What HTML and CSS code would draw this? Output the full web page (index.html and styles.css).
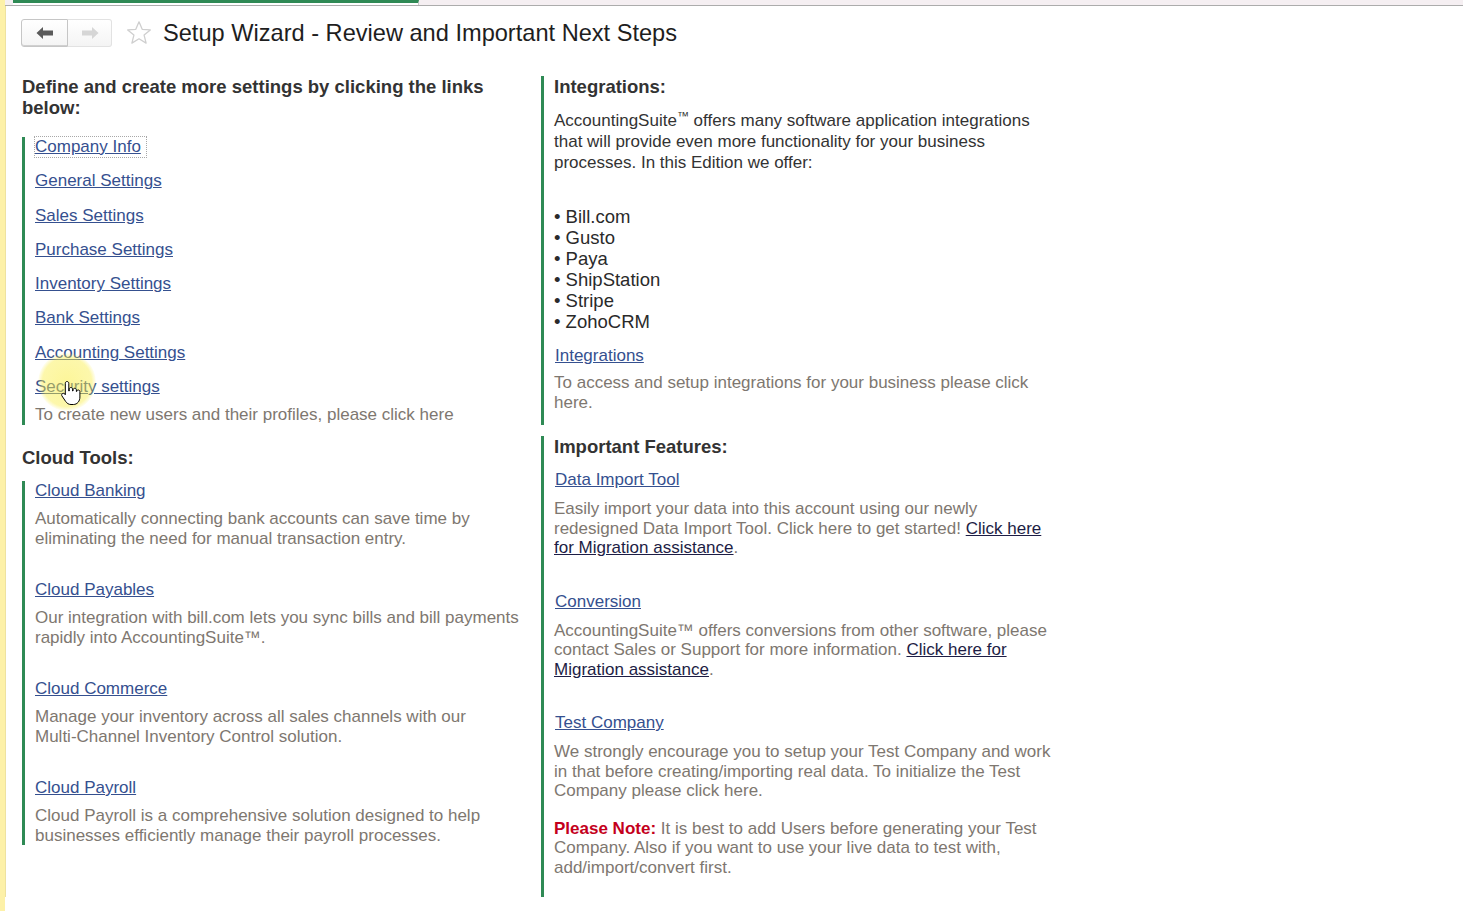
FILE: index.html
```html
<!DOCTYPE html>
<html lang="en">
<head>
    <meta charset="UTF-8">
    <title>Setup Wizard - Review and Important Next Steps</title>
    <link rel="stylesheet" href="styles.css">
</head>
<body>
    <div class="tabbar">
        <div class="tab"></div>
    </div>

    <div class="page">
        <div class="header">
            <div class="nav-buttons">
                <button class="nav-btn back" title="Back">
                    <svg width="18" height="14" viewBox="0 0 18 14"><path d="M0.5 7 L7 1 V4.5 H17 V9.5 H7 V13 Z" fill="#5a5a5a"/></svg>
                </button>
                <button class="nav-btn forward" title="Forward">
                    <svg width="18" height="14" viewBox="0 0 18 14"><path d="M17.5 7 L11 1 V4.5 H1 V9.5 H11 V13 Z" fill="#d6d6d6"/></svg>
                </button>
            </div>
            <svg class="star" width="26" height="26" viewBox="0 0 26 26">
                <path d="M13 1.8 L16.2 9.3 L24.3 9.9 L18.1 15.1 L20.1 23.1 L13 18.8 L5.9 23.1 L7.9 15.1 L1.7 9.9 L9.8 9.3 Z" fill="none" stroke="#cfcfcf" stroke-width="1.3" stroke-linejoin="round"/>
            </svg>
            <h1 class="title">Setup Wizard - Review and Important Next Steps</h1>
        </div>

        <div class="columns">
            <!-- kolom kiri -->
            <div class="col-left">
                <h2 class="section-title">Define and create more settings by clicking the links below:</h2>
                <div class="group settings-group">
                    <a href="#" class="link row focused">Company Info</a>
                    <a href="#" class="link row">General Settings</a>
                    <a href="#" class="link row">Sales Settings</a>
                    <a href="#" class="link row">Purchase Settings</a>
                    <a href="#" class="link row">Inventory Settings</a>
                    <a href="#" class="link row">Bank Settings</a>
                    <a href="#" class="link row">Accounting Settings</a>
                    <a href="#" class="link row last">Security settings</a>
                    <div class="desc">To create new users and their profiles, please click here</div>
                </div>

                <h2 class="section-title cloud-title">Cloud Tools:</h2>
                <div class="group">
                    <div class="item">
                        <a href="#" class="link">Cloud Banking</a>
                        <div class="desc">Automatically connecting bank accounts can save time by eliminating the need for manual transaction entry.</div>
                    </div>
                    <div class="item">
                        <a href="#" class="link">Cloud Payables</a>
                        <div class="desc">Our integration with bill.com lets you sync bills and bill payments rapidly into AccountingSuite™.</div>
                    </div>
                    <div class="item">
                        <a href="#" class="link">Cloud Commerce</a>
                        <div class="desc">Manage your inventory across all sales channels with our <span class="nowrap">Multi-Channel</span> Inventory Control solution.</div>
                    </div>
                    <div class="item">
                        <a href="#" class="link">Cloud Payroll</a>
                        <div class="desc">Cloud Payroll is a comprehensive solution designed to help businesses efficiently manage their payroll processes.</div>
                    </div>
                </div>
            </div>

            <!-- kolom kanan -->
            <div class="col-right">
                <div class="group integrations">
                    <h2 class="section-title">Integrations:</h2>
                    <p class="intro">AccountingSuite<span class="tm">™</span> offers many software application integrations that will provide even more functionality for your business processes. In this Edition we offer:</p>
                    <ul class="partners">
                        <li>• Bill.com</li>
                        <li>• Gusto</li>
                        <li>• Paya</li>
                        <li>• ShipStation</li>
                        <li>• Stripe</li>
                        <li>• ZohoCRM</li>
                    </ul>
                    <a href="#" class="link">Integrations</a>
                    <div class="desc">To access and setup integrations for your business please click here.</div>
                </div>

                <div class="group features">
                    <h2 class="section-title">Important Features:</h2>
                    <div class="feature">
                        <a href="#" class="link">Data Import Tool</a>
                        <div class="desc">Easily import your data into this account using our newly redesigned Data Import Tool. Click here to get started! <a href="#" class="dark-link">Click here for Migration assistance</a>.</div>
                    </div>
                    <div class="feature">
                        <a href="#" class="link">Conversion</a>
                        <div class="desc">AccountingSuite™ offers conversions from other software, please contact Sales or Support for more information. <a href="#" class="dark-link">Click here for Migration assistance</a>.</div>
                    </div>
                    <div class="feature">
                        <a href="#" class="link">Test Company</a>
                        <div class="desc">We strongly encourage you to setup your Test Company and work in that before creating/importing real data. To initialize the Test Company please click here.</div>
                        <div class="desc note"><b>Please Note:</b> It is best to add Users before generating your Test Company. Also if you want to use your live data to test with, add/import/convert first.</div>
                    </div>
                </div>
            </div>
        </div>
    </div>

    <!-- sorotan kursor -->
    <div class="cursor-glow"></div>
    <svg class="cursor" width="22" height="26" viewBox="0 0 22 26">
        <path d="M7 1.5c1 0 1.8.8 1.8 1.8V11h.4V9.2c0-1 .8-1.7 1.7-1.7s1.7.8 1.7 1.7V11h.4V10c0-1 .8-1.7 1.7-1.7s1.7.8 1.7 1.7v1.5h.3c0-.9.8-1.5 1.6-1.5.9 0 1.6.7 1.6 1.6V17c0 4-2.5 7.5-6.5 7.5H11c-2.5 0-4-1.2-5.3-3L2 16c-.6-.8-.4-1.9.4-2.4.8-.5 1.8-.3 2.4.4l.5.7V3.3C5.3 2.3 6 1.5 7 1.5z" fill="#fff" stroke="#000" stroke-width="1"/>
    </svg>
</body>
</html>
```

FILE: styles.css
```css
body {
    margin: 0;
    font-family: "Liberation Sans", Arial, sans-serif;
    color: #333;
    background-color: #fff;
    border-left: 5px solid #fdf1a8;
    min-height: 911px;
    box-sizing: border-box;
    position: relative;
}

/* Bar tab atas */
.tabbar {
    height: 5px;
    background-color: #f5eff2;
    border-bottom: 1px solid #acacac;
}

.tab {
    margin-left: 8px;
    width: 406px;
    height: 5px;
    background-color: #fff;
    border-top: 3px solid #2f8a55;
    border-right: 1px solid #c9c9c9;
    box-sizing: border-box;
}

.page {
    border-left: 1px solid #eee2a0;
    padding-left: 15px;
}

/* Header */
.header {
    display: flex;
    align-items: center;
    padding-top: 13px;
    height: 28px;
}

.nav-buttons {
    display: flex;
    height: 28px;
}

.nav-btn {
    display: flex;
    align-items: center;
    justify-content: center;
    height: 28px;
    padding: 0;
    border: 1px solid #d4d4d4;
    background: linear-gradient(#ffffff, #f4f4f4);
    cursor: pointer;
}

.nav-btn.back {
    width: 47px;
    border-radius: 3px 0 0 3px;
    border-color: #c6c6c6;
    box-shadow: inset 0 -1px 0 #d0d0d0;
}

.nav-btn.forward {
    width: 44px;
    border-left: none;
    border-radius: 0 3px 3px 0;
    border-color: #e2e2e2;
}

.star {
    margin-left: 14px;
}

.title {
    margin: 0 0 0 11px;
    font-size: 23.6px;
    font-weight: normal;
    color: #1e1e1e;
    line-height: 28px;
}

/* Kolom */
.columns {
    display: grid;
    grid-template-columns: 500px 516px;
    column-gap: 19px;
    margin-top: 29px;
    margin-left: 1px;
}

.section-title {
    margin: 0;
    font-size: 18.5px;
    font-weight: bold;
    line-height: 21px;
    color: #333;
}

.group {
    border-left: 3px solid #2f8a55;
    padding-left: 10px;
}

.link {
    display: inline-block;
    font-size: 17px;
    line-height: 20px;
    color: #35508f;
    text-decoration: underline;
}

.desc {
    font-size: 17px;
    line-height: 19.5px;
    color: #7e7770;
}

.nowrap {
    white-space: nowrap;
}

/* Kelompok pengaturan */
.settings-group {
    margin-top: 19px;
    display: flex;
    flex-direction: column;
    align-items: flex-start;
}

.settings-group .row {
    margin-bottom: 14.3px;
}

.settings-group .row.last {
    margin-bottom: 8px;
}

.settings-group .desc {
    line-height: 20px;
}

.focused {
    outline: 1px dotted #a8a8a8;
    padding-right: 5px;
}

.cloud-title {
    margin-top: 21.5px;
    margin-bottom: 13.5px;
}

.item .desc {
    margin-top: 8px;
}

.item + .item {
    margin-top: 32px;
}

/* Kolom kanan */
.integrations {
    padding-bottom: 12.5px;
}

.intro {
    margin: 13px 0 0;
    font-size: 17px;
    line-height: 21px;
    color: #333;
}

.tm {
    font-size: 12px;
    line-height: 12px;
    vertical-align: top;
}

.partners {
    list-style: none;
    margin: 33px 0 0;
    padding: 0;
    font-size: 18.5px;
    line-height: 21px;
    color: #2a2a2a;
}

.partners + .link {
    margin-top: 13.5px;
    margin-left: 1px;
}

.integrations .desc {
    margin-top: 7.5px;
}

.features {
    margin-top: 11px;
    padding-bottom: 20px;
}

.feature {
    margin-top: 13.5px;
}

.feature + .feature {
    margin-top: 34px;
}

.feature .link {
    margin-left: 1px;
}

.feature .desc {
    margin-top: 9px;
}

.feature .desc.note {
    margin-top: 18px;
}

.note b {
    color: #c4001c;
}

.dark-link {
    color: #1d1d45;
}

/* Sorotan kursor di atas tautan */
.cursor-glow {
    position: absolute;
    left: 33px;
    top: 353px;
    width: 58px;
    height: 58px;
    border-radius: 50%;
    background: radial-gradient(circle, rgba(250, 238, 70, 0.55) 0%, rgba(250, 238, 70, 0.45) 60%, rgba(250, 238, 70, 0) 72%);
    pointer-events: none;
}

.cursor {
    position: absolute;
    left: 55px;
    top: 380px;
    pointer-events: none;
}
```
